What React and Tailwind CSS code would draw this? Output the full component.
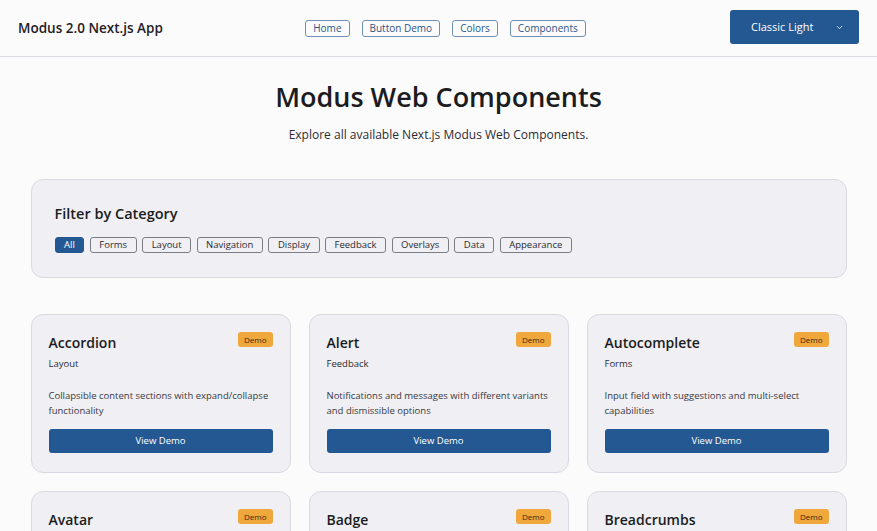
import { ChevronDown } from 'lucide-react'

const navLinks = ['Home', 'Button Demo', 'Colors', 'Components']
const categories = ['All', 'Forms', 'Layout', 'Navigation', 'Display', 'Feedback', 'Overlays', 'Data', 'Appearance']

const components = [
  { name: 'Accordion', category: 'Layout', description: 'Collapsible content sections with expand/collapse functionality' },
  { name: 'Alert', category: 'Feedback', description: 'Notifications and messages with different variants and dismissible options' },
  { name: 'Autocomplete', category: 'Forms', description: 'Input field with suggestions and multi-select capabilities' },
  { name: 'Avatar', category: 'Display', description: 'User profile images with fallback initials' },
  { name: 'Badge', category: 'Display', description: 'Small status indicators and labels' },
  { name: 'Breadcrumbs', category: 'Navigation', description: 'Hierarchical navigation trail' },
]

function ComponentCard({ item }) {
  return (
    <div className="h-[159px] rounded-[12px] border border-[#d9d9e2] bg-[#efeff4] px-[17px] pt-[17px] pb-[19px] flex flex-col">
      <div className="flex items-start justify-between">
        <h3 className="text-[14px] leading-[20px] font-semibold text-[#1b1c20] mt-[1px]">{item.name}</h3>
        <span className="h-[15px] px-[6px] rounded-[3px] bg-[#f0a73c] text-[8px] leading-[15px] text-[#3b2a10]">Demo</span>
      </div>
      <p className="mt-[4px] text-[9.5px] leading-[14px] text-[#2c2c33]">{item.category}</p>
      <p className="mt-[17px] text-[9.5px] leading-[15px] text-[#3a3a42] h-[30px]">{item.description}</p>
      <button className="mt-auto h-[24px] w-full rounded-[3px] bg-[#245892] text-white text-[9.5px] leading-[24px]">
        View Demo
      </button>
    </div>
  )
}

export default function App() {
  return (
    <div className="min-h-screen bg-[#fbfbfc] text-[#1b1c20]" style={{ fontFamily: '"Open Sans", "Noto Sans", sans-serif' }}>
      {/* Header */}
      <header className="h-[57px] border-b border-[#dcdce3] bg-[#fbfbfc] px-[18px] flex items-center">
        <div className="flex-1 text-[13.5px] font-semibold text-[#1f2024]">Modus 2.0 Next.js App</div>
        <nav className="flex items-center gap-[12px] ml-[14px]">
          {navLinks.map((link) => (
            <span
              key={link}
              className="h-[17px] px-[7px] rounded-[3px] border border-[#6f8fb4] text-[10px] leading-[15px] text-[#2b5687]"
            >
              {link}
            </span>
          ))}
        </nav>
        <div className="flex-1 flex justify-end">
          <button className="h-[34px] w-[129px] mb-[2px] rounded-[3px] bg-[#245892] text-white text-[11px] flex items-center pl-[21px]">
            <span>Classic Light</span>
            <ChevronDown className="ml-[22px] w-[9px] h-[9px]" strokeWidth={2} />
          </button>
        </div>
      </header>

      <main className="max-w-[816px] mx-auto">
        <div className="text-center pt-[20px]">
          <h1 className="text-[27px] leading-[40px] font-semibold text-[#1b1c20]">Modus Web Components</h1>
          <p className="mt-[9px] text-[12px] leading-[17px] text-[#2c2c33]">Explore all available Next.js Modus Web Components.</p>
        </div>

        {/* Filters */}
        <div className="mt-[36px] h-[99px] rounded-[12px] border border-[#d9d9e2] bg-[#efeff4] px-[23px] pt-[24px]">
          <h2 className="text-[14.5px] leading-[20px] font-semibold text-[#1b1c20]">Filter by Category</h2>
          <div className="mt-[13px] flex gap-[5.5px]">
            {categories.map((cat) => (
              <span
                key={cat}
                className={
                  cat === 'All'
                    ? 'h-[16px] px-[8.5px] rounded-[3px] border border-[#245892] bg-[#245892] text-white text-[9.5px] leading-[14px]'
                    : 'h-[16px] px-[8.5px] rounded-[3px] border border-[#7d7d86] text-[#2c2c33] text-[9.5px] leading-[14px]'
                }
              >
                {cat}
              </span>
            ))}
          </div>
        </div>

        {/* Component grid */}
        <div className="mt-[36px] grid grid-cols-3 gap-[18px] pb-[20px]">
          {components.map((item) => (
            <ComponentCard key={item.name} item={item} />
          ))}
        </div>
      </main>
    </div>
  )
}
